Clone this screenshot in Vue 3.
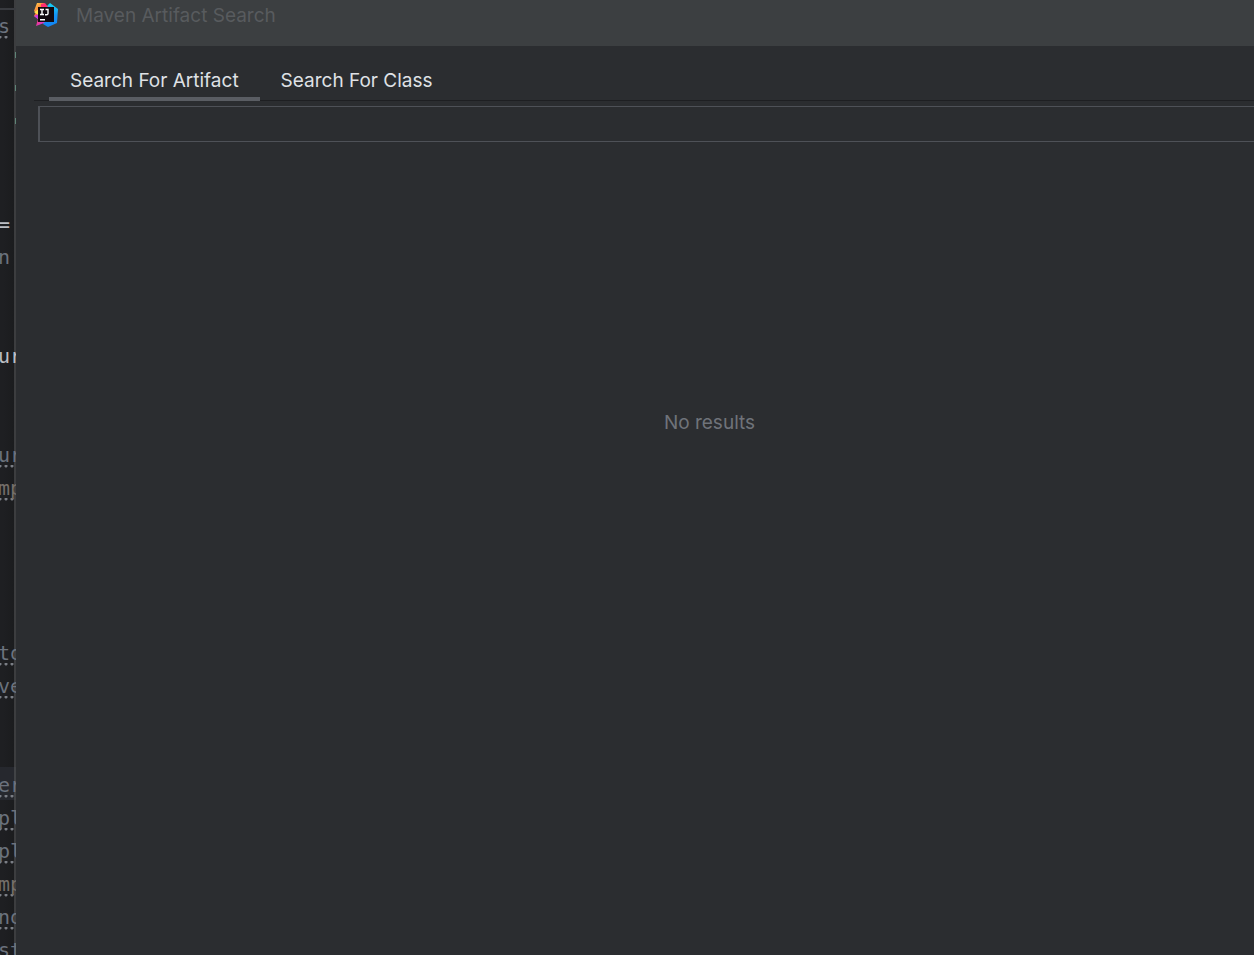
<script setup>
import { ref } from 'vue'

const tabs = ['Search For Artifact', 'Search For Class']
const active = ref(0)
const query = ref('')

// Visible slice of the editor behind the dialog, one entry per line
const lines = [
  { text: 's', dots: 1 },
  { tick: true },
  { tick: true },
  { tick: true },
  {},
  {},
  { text: '=', tone: 'bright' },
  { text: 'n' },
  {},
  {},
  { text: 'ur', tone: 'bright' },
  {},
  {},
  { text: 'ur', dots: 2 },
  { text: 'mp', dots: 2, tone: 'warm' },
  {},
  {},
  {},
  {},
  { text: 'to', dots: 2 },
  { text: 've', dots: 2 },
  {},
  {},
  { text: 'er', dots: 2, current: true },
  { text: 'pl', dots: 2 },
  { text: 'pl', dots: 2 },
  { text: 'mp', dots: 2, tone: 'warm' },
  { text: 'no', dots: 2 },
  { text: 'st', dots: 2 },
]
</script>

<template>
  <div class="screen">
    <div class="editor" aria-hidden="true">
      <div
        v-for="(line, i) in lines"
        :key="i"
        class="line"
        :class="[line.tone, { current: line.current, tick: line.tick }]"
      >
        <span v-if="line.text" :class="{ dotted: line.dots, short: line.dots === 1 }">{{ line.text }}</span>
      </div>
    </div>

    <section class="dialog" aria-labelledby="dialog-title">
      <header class="titlebar">
        <svg class="logo" viewBox="0 0 24 24" aria-hidden="true">
          <defs>
            <linearGradient id="warm" x1="0" y1="0" x2="0.5" y2="1">
              <stop offset="0" stop-color="#ffd84a" />
              <stop offset="0.4" stop-color="#ff7a3c" />
              <stop offset="0.65" stop-color="#ff3570" />
              <stop offset="1" stop-color="#d13bd0" />
            </linearGradient>
            <linearGradient id="cool" x1="0" y1="0" x2="0" y2="1">
              <stop offset="0" stop-color="#15d4f5" />
              <stop offset="0.5" stop-color="#1595f5" />
              <stop offset="1" stop-color="#1282f2" />
            </linearGradient>
          </defs>
          <path fill="url(#cool)" d="M12 4 16 0 24 6 23 20 14 24 9 21Z" />
          <path fill="url(#warm)" d="M3 0 10 0 13 4 12 17 10 20 2 23 4 16 0 13 2 9 0 8Z" />
          <path fill="#ff2d6f" d="M7 1 11 0 14 4 7 5Z" />
          <path fill="#ffe04d" d="M0 9 5 6 4 12Z" />
          <path fill="#c63be0" d="M0 13 5 11 5 17Z" />
          <rect x="4" y="4" width="16" height="15" fill="#120b10" />
          <path
            fill="none"
            stroke="#fff"
            stroke-width="1.4"
            d="M6 6.5H10M8 6.5V11.5M6 11.5H10M11.5 6.5H14V10.5Q14 11.8 12.5 11.8H11"
          />
          <path fill="#fff" d="M6 16h5v1.5h-5z" />
        </svg>
        <h1 id="dialog-title">Maven Artifact Search</h1>
      </header>

      <div class="content">
        <nav class="tabs" role="tablist">
          <button
            v-for="(tab, i) in tabs"
            :key="tab"
            type="button"
            role="tab"
            :aria-selected="active === i"
            :class="{ active: active === i }"
            @click="active = i"
          >{{ tab }}</button>
        </nav>
        <input v-model="query" class="query" type="text" aria-label="Search query" />
        <div class="results">No results</div>
      </div>
    </section>
  </div>
</template>

<style>
body {
  margin: 0;
  background: #2b2d30;
}
</style>

<style scoped>
.screen {
  display: grid;
  grid-template-columns: 16px minmax(0, 1fr);
  height: 100vh;
  overflow: hidden;
  background: #2b2d30;
  font-family: Inter, "Liberation Sans", sans-serif;
}

.editor {
  box-sizing: border-box;
  min-height: 0;
  overflow: hidden;
  padding-top: 8px;
  background: linear-gradient(90deg, #1e1f22 0 4px, #1b1c1e 14px, #3c3d3f 14px);
  color: #6b727d;
  font: 20px/37px "DejaVu Sans Mono", "Liberation Mono", monospace;
}

.line {
  box-sizing: border-box;
  height: 33px;
  white-space: nowrap;
}

.line:first-child {
  border-top: 2px solid #393b40;
  line-height: 33px;
}

.line span {
  display: block;
  height: 100%;
  margin-left: -2px;
}

.bright {
  color: #bcbec4;
}

.warm {
  color: #746e69;
}

.dotted {
  background: radial-gradient(circle at 2px 1px, #7a7e85 1px, transparent 2px) 0 calc(100% - 2px) / 6px 3px repeat-x;
}

.short {
  width: 10px;
}

.current {
  background: linear-gradient(90deg, #26282e 14px, #414346 14px);
}

.tick {
  background: linear-gradient(#5f8577, #5f8577) 100% 11px / 1px 6px no-repeat;
}

.dialog {
  display: flex;
  flex-direction: column;
  min-width: 0;
  overflow: hidden;
}

.titlebar {
  display: flex;
  align-items: flex-start;
  gap: 18px;
  box-sizing: border-box;
  height: 46px;
  padding: 3px 18px 0;
  background: #3c3f41;
}

.logo {
  width: 24px;
  height: 24px;
  flex: none;
}

h1 {
  margin: 0;
  color: #585b5e;
  font-size: 19px;
  font-weight: 400;
  line-height: 26px;
}

/* The dialog runs on past the right edge of the screen */
.content {
  display: flex;
  flex: 1;
  flex-direction: column;
  box-sizing: border-box;
  width: calc(100% + 131px);
  padding-left: 18px;
}

.tabs {
  display: flex;
  height: 55px;
  padding-left: 15px;
  background: linear-gradient(#1e1f22, #1e1f22) 0 100% / 100% 1px no-repeat;
}

.tabs button {
  margin: 0;
  padding: 19px 21px 0;
  border: 0;
  border-bottom: 4px solid transparent;
  background: none;
  color: #dfe1e5;
  font: 400 19px/26px Inter, "Liberation Sans", sans-serif;
}

.tabs .active {
  border-bottom-color: #5a5d63;
}

.query {
  box-sizing: border-box;
  height: 36px;
  margin: 5px 0 0 4px;
  padding: 0 10px;
  border: 1px solid #4e5157;
  border-left-width: 2px;
  border-radius: 0;
  outline: 0;
  background: transparent;
  color: #dfe1e5;
  font: 400 19px/26px Inter, "Liberation Sans", sans-serif;
}

.results {
  flex: 1;
  padding-top: 268px;
  color: #6f737a;
  font-size: 19px;
  line-height: 26px;
  text-align: center;
}
</style>
